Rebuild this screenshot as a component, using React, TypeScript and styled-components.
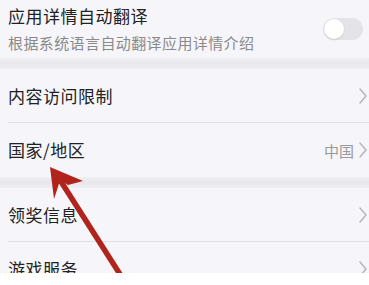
import styled, { createGlobalStyle } from 'styled-components';

const GlobalStyle = createGlobalStyle`
  html, body {
    margin: 0;
    padding: 0;
    background: #ffffff;
  }
  body {
    font-family: "Noto Sans CJK SC", "Noto Sans", sans-serif;
  }
`;

const Screen = styled.div`
  width: 369px;
  height: 285px;
  display: flex;
  flex-direction: column;
  background: #ffffff;
  overflow: hidden;
`;

const Viewport = styled.div`
  position: relative;
  height: 273px;
  overflow: hidden;
  background: #f6f6fa;
  display: flex;
  flex-direction: column;
`;

const Group = styled.div`
  display: flex;
  flex-direction: column;
  padding-left: 8px;
`;

const Band = styled.div`
  height: 11px;
  flex-shrink: 0;
  background: linear-gradient(#efeff3, #e8e8ec 50%, #efeff3);
`;

const Row = styled.div<{ $h: number }>`
  height: ${(p) => p.$h}px;
  flex-shrink: 0;
  display: flex;
  align-items: center;
  justify-content: space-between;
  padding-right: 2px;
  box-sizing: border-box;
`;

const Divider = styled.div`
  height: 1px;
  background: #e0e0e4;
`;

const TextCol = styled.div`
  display: flex;
  flex-direction: column;
  gap: 8px;
`;

const Title = styled.div`
  font-size: 17px;
  letter-spacing: 0.5px;
  line-height: 20px;
  color: #222222;
  white-space: nowrap;
`;

const Sub = styled.div`
  font-size: 15px;
  letter-spacing: 0.4px;
  line-height: 18px;
  color: #8a8a8a;
  white-space: nowrap;
`;

const Trail = styled.div`
  display: flex;
  align-items: center;
  gap: 5px;
`;

const Value = styled.span`
  font-size: 15px;
  color: #999999;
`;

const Toggle = styled.div`
  width: 40px;
  height: 22px;
  border-radius: 11px;
  background: #e4e4e8;
  margin-right: 4px;
  display: flex;
  align-items: center;
  padding: 1px;
  box-sizing: border-box;
`;

const Knob = styled.div`
  width: 20px;
  height: 20px;
  border-radius: 50%;
  background: #ffffff;
  box-shadow: 0 1px 2px rgba(0, 0, 0, 0.12);
`;

const Arrow = styled.svg`
  position: absolute;
  left: 0;
  top: 0;
  pointer-events: none;
`;

const Footer = styled.div`
  flex: 1;
  background: #ffffff;
`;

const Chevron = () => (
  <svg width="8" height="16" viewBox="0 0 8 16" fill="none" stroke="#b4b4b8" strokeWidth="1.4" strokeLinecap="round" strokeLinejoin="round">
    <polyline points="1 1 7 8 1 15" />
  </svg>
);

const NavRow = ({ label, value, h }: { label: string; value?: string; h: number }) => (
  <Row $h={h}>
    <Title>{label}</Title>
    <Trail>
      {value && <Value>{value}</Value>}
      <Chevron />
    </Trail>
  </Row>
);

export default function App() {
  return (
    <>
      <GlobalStyle />
      <Screen>
        <Viewport>
          <Group>
            <Row $h={58}>
              <TextCol>
                <Title>应用详情自动翻译</Title>
                <Sub>根据系统语言自动翻译应用详情介绍</Sub>
              </TextCol>
              <Toggle>
                <Knob />
              </Toggle>
            </Row>
          </Group>
          <Band />
          <Group>
            <NavRow label="内容访问限制" h={53} />
            <Divider />
            <NavRow label="国家/地区" value="中国" h={54} />
          </Group>
          <Band />
          <Group>
            <NavRow label="领奖信息" h={53} />
            <Divider />
            <NavRow label="游戏服务" h={53} />
          </Group>
          <Arrow width="369" height="273" viewBox="0 0 369 273">
            <line x1="60" y1="180" x2="130" y2="290" stroke="#b1241c" strokeWidth="5.5" />
            <polygon points="50,167 83,181 68,185 60,180 57,190 54,199" fill="#b1241c" />
          </Arrow>
        </Viewport>
        <Footer />
      </Screen>
    </>
  );
}
